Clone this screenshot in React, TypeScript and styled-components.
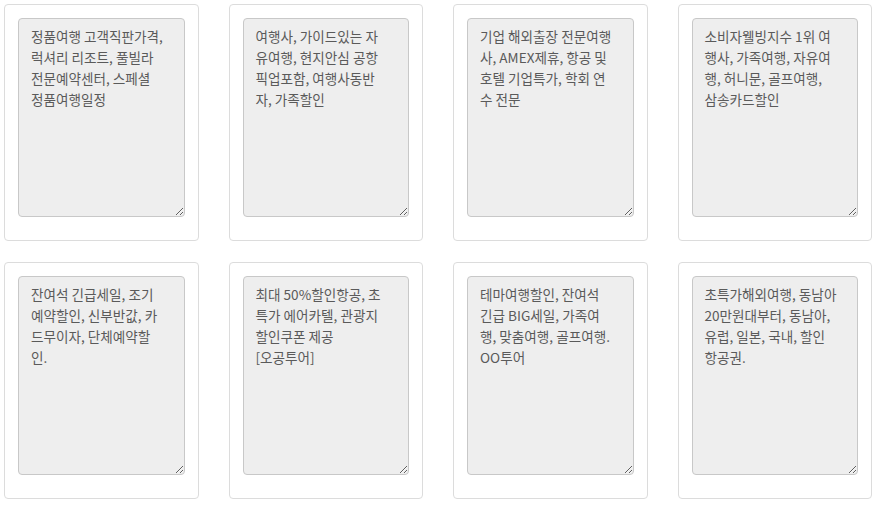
import React from "react";
import styled, { createGlobalStyle } from "styled-components";

const Global = createGlobalStyle`
  html, body { margin: 0; padding: 0; background: #fff; }
  * { box-sizing: border-box; }
`;

const Grid = styled.div`
  display: grid;
  grid-template-columns: repeat(4, 1fr);
  column-gap: 30px;
  row-gap: 21px;
  padding: 4px;
`;

const Card = styled.div`
  border: 1px solid #dcdcdc;
  border-radius: 4px;
  background: #fff;
  padding: 13px 13px 23px 13px;
  height: 237px;
`;

const Memo = styled.textarea`
  display: block;
  width: 100%;
  height: 199px;
  margin: 0;
  padding: 7px 8px 6px 12px;
  border: 1px solid #c8c8c8;
  border-radius: 4px;
  background: #eeeeee;
  color: #5a5a5a;
  font-family: "Noto Sans CJK KR", "Noto Sans", sans-serif;
  font-size: 13.6px;
  line-height: 21px;
  outline: none;
  overflow: hidden;
  resize: vertical;
  white-space: pre;
`;

const items = [
  "정품여행 고객직판가격,\n럭셔리 리조트, 풀빌라\n전문예약센터, 스페셜\n정품여행일정",
  "여행사, 가이드있는 자\n유여행, 현지안심 공항\n픽업포함, 여행사동반\n자, 가족할인",
  "기업 해외출장 전문여행\n사, AMEX제휴, 항공 및\n호텔 기업특가, 학회 연\n수 전문",
  "소비자웰빙지수 1위 여\n행사, 가족여행, 자유여\n행, 허니문, 골프여행,\n삼송카드할인",
  "잔여석 긴급세일, 조기\n예약할인, 신부반값, 카\n드무이자, 단체예약할\n인.",
  "최대 50%할인항공, 초\n특가 에어카텔, 관광지\n할인쿠폰 제공\n[오공투어]",
  "테마여행할인, 잔여석\n긴급 BIG세일, 가족여\n행, 맞춤여행, 골프여행.\nOO투어",
  "초특가해외여행, 동남아\n20만원대부터, 동남아,\n유럽, 일본, 국내, 할인\n항공권.",
];

export default function App() {
  return (
    <>
      <Global />
      <Grid>
        {items.map((t, i) => (
          <Card key={i}>
            <Memo readOnly wrap="off" defaultValue={t} />
          </Card>
        ))}
      </Grid>
    </>
  );
}
